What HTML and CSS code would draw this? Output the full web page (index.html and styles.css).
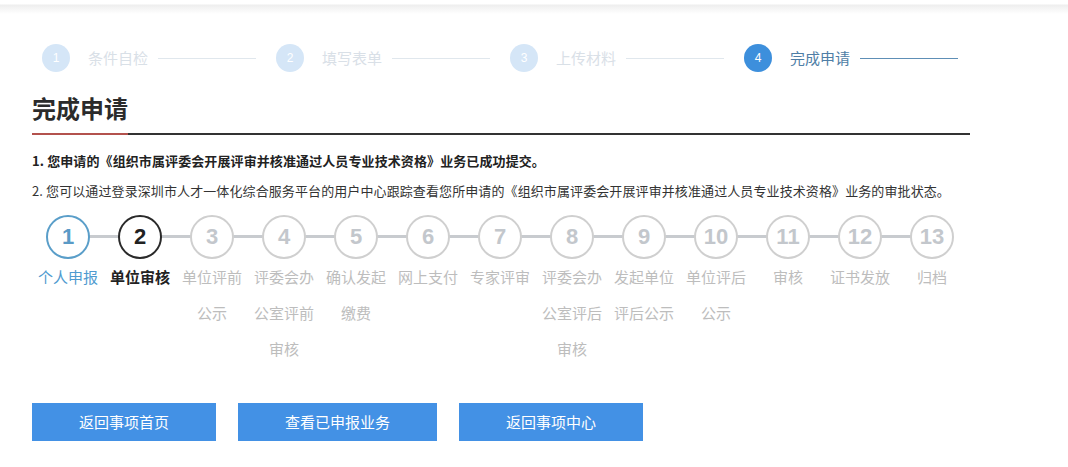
FILE: index.html
```html
<!DOCTYPE html>
<html lang="zh-CN">
<head>
<meta charset="utf-8">
<title>完成申请</title>
<link rel="stylesheet" href="styles.css">
</head>
<body>
<div class="topbar"></div>
<div class="page">
  <div class="wizard">
    <div class="wstep"><span class="wnum">1</span><span class="wlabel">条件自检</span><span class="wline"></span></div>
    <div class="wstep"><span class="wnum">2</span><span class="wlabel">填写表单</span><span class="wline"></span></div>
    <div class="wstep"><span class="wnum">3</span><span class="wlabel">上传材料</span><span class="wline"></span></div>
    <div class="wstep active"><span class="wnum">4</span><span class="wlabel">完成申请</span><span class="wline"></span></div>
  </div>

  <div class="title-wrap"><h2 class="title">完成申请</h2></div>

  <p class="msg msg-strong">1. 您申请的《组织市属评委会开展评审并核准通过人员专业技术资格》业务已成功提交。</p>
  <p class="msg">2. 您可以通过登录深圳市人才一体化综合服务平台的用户中心跟踪查看您所申请的《组织市属评委会开展评审并核准通过人员专业技术资格》业务的审批状态。</p>

  <div class="progress">
    <div class="pstep done"><div class="pcircle">1</div><div class="plabel">个人申报</div></div>
    <div class="pstep current"><div class="pcircle">2</div><div class="plabel">单位审核</div></div>
    <div class="pstep"><div class="pcircle">3</div><div class="plabel">单位评前公示</div></div>
    <div class="pstep"><div class="pcircle">4</div><div class="plabel">评委会办公室评前审核</div></div>
    <div class="pstep"><div class="pcircle">5</div><div class="plabel">确认发起缴费</div></div>
    <div class="pstep"><div class="pcircle">6</div><div class="plabel">网上支付</div></div>
    <div class="pstep"><div class="pcircle">7</div><div class="plabel">专家评审</div></div>
    <div class="pstep"><div class="pcircle">8</div><div class="plabel">评委会办公室评后审核</div></div>
    <div class="pstep"><div class="pcircle">9</div><div class="plabel">发起单位评后公示</div></div>
    <div class="pstep"><div class="pcircle">10</div><div class="plabel">单位评后公示</div></div>
    <div class="pstep"><div class="pcircle">11</div><div class="plabel">审核</div></div>
    <div class="pstep"><div class="pcircle">12</div><div class="plabel">证书发放</div></div>
    <div class="pstep"><div class="pcircle">13</div><div class="plabel">归档</div></div>
  </div>

  <div class="actions">
    <a class="btn" href="#">返回事项首页</a>
    <a class="btn" href="#">查看已申报业务</a>
    <a class="btn" href="#">返回事项中心</a>
  </div>
</div>
</body>
</html>
```

FILE: styles.css
```css
* { box-sizing: border-box; }

html, body {
  margin: 0;
  padding: 0;
  background: #fff;
}

body {
  font-family: "Noto Sans CJK SC", "Noto Sans", sans-serif;
  color: #333;
}

.topbar {
  height: 14px;
  background: linear-gradient(#ffffff 0, #ffffff 4px, #eeeeee 5px, #ffffff 14px);
}

.page {
  width: 970px;
  padding-left: 32px;
}

/* top wizard */
.wizard {
  display: flex;
  align-items: center;
  margin-top: 30px;
  padding-left: 10px;
  height: 28px;
}

.wstep {
  display: flex;
  align-items: center;
  margin-right: 20px;
}

.wnum {
  width: 28px;
  height: 28px;
  border-radius: 50%;
  background: #d5e6f7;
  color: #fff;
  font-family: "Liberation Sans", Arial, sans-serif;
  font-size: 12px;
  line-height: 28px;
  text-align: center;
}

.wlabel {
  margin-left: 18px;
  font-size: 15px;
  line-height: 20px;
  color: #d9e0e7;
  white-space: nowrap;
}

.wline {
  width: 98px;
  height: 1px;
  margin-left: 10px;
  background: #e0e7ed;
}

.wstep.active .wnum { background: #3d8fdc; }
.wstep.active .wlabel { color: #4f7ea6; }
.wstep.active .wline { background: #5e8fb6; }

/* title */
.title-wrap {
  margin-top: 20px;
  border-bottom: 2px solid #333;
}

.title {
  display: inline-block;
  margin: 0 0 -2px;
  padding-bottom: 9px;
  font-size: 24px;
  line-height: 32px;
  font-weight: bold;
  color: #2b2b2b;
  border-bottom: 2px solid #b3524d;
}

/* messages */
.msg {
  margin: 0;
  font-size: 13px;
  line-height: 30px;
  color: #333;
  white-space: nowrap;
  letter-spacing: 0.1px;
}

.msg-strong {
  margin-top: 11px;
  font-weight: bold;
  color: #222;
}

/* process progress */
.progress {
  display: flex;
  margin-top: 9px;
}

.pstep {
  position: relative;
  width: 72px;
  display: flex;
  flex-direction: column;
  align-items: center;
}

.pstep:not(:last-child)::after {
  content: "";
  position: absolute;
  left: 36px;
  top: 20px;
  width: 72px;
  height: 3px;
  background: #c8cbcf;
}

.pcircle {
  position: relative;
  z-index: 1;
  width: 44px;
  height: 44px;
  border: 2px solid #cfcfcf;
  border-radius: 50%;
  background: #fff;
  color: #c3c7cc;
  font-family: "Liberation Sans", Arial, sans-serif;
  font-weight: bold;
  font-size: 22px;
  line-height: 40px;
  text-align: center;
}

.plabel {
  width: 72px;
  font-size: 15px;
  line-height: 36px;
  text-align: center;
  color: #bdbdbd;
}

.pstep.done .pcircle { border-color: #5a9ec9; color: #5a9ac6; }
.pstep.done .plabel { color: #4f9bd0; }
.pstep.current .pcircle { border-color: #2a2a2a; color: #222; }
.pstep.current .plabel { color: #222; font-weight: bold; }

/* buttons */
.actions {
  display: flex;
  gap: 22px;
  margin-top: 36px;
}

.btn {
  display: block;
  height: 38px;
  padding: 0 47px;
  background: #4391e5;
  color: #fff;
  font-size: 15px;
  line-height: 38px;
  text-decoration: none;
  white-space: nowrap;
}
```
